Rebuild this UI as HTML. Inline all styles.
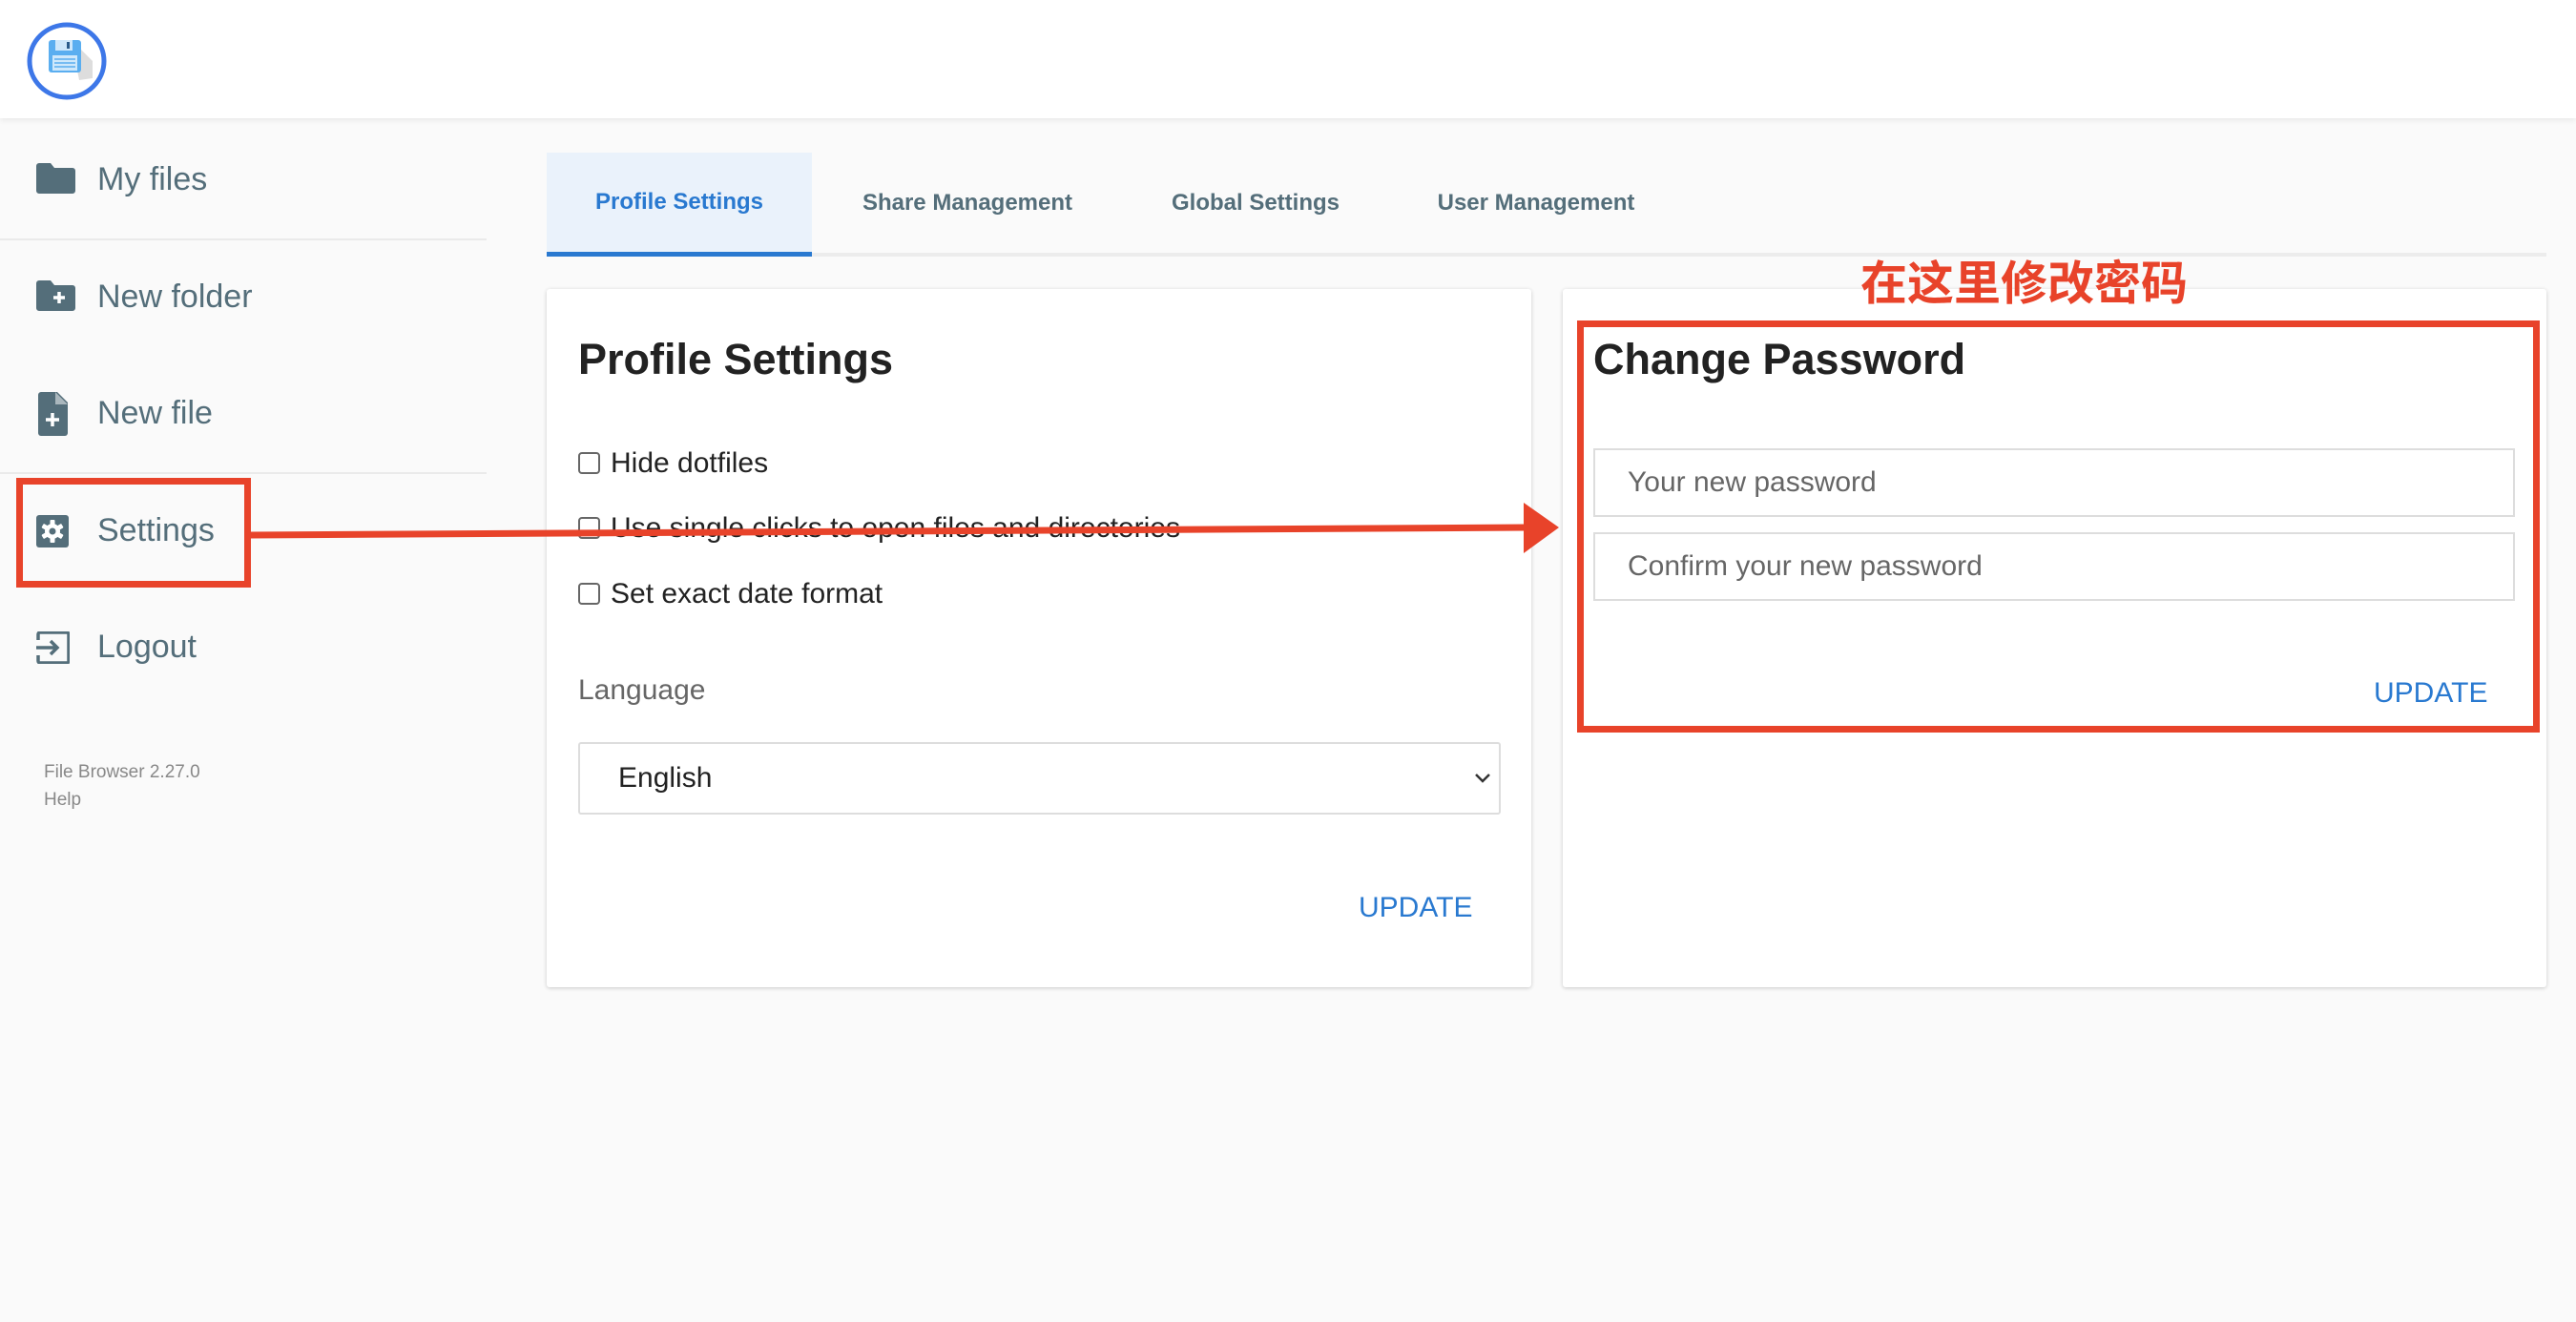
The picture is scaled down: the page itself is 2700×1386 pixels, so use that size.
<!DOCTYPE html>
<html><head><meta charset="utf-8"><style>
*{box-sizing:border-box;margin:0;padding:0}
body{width:2700px;height:1386px;background:#fafafa;font-family:"Liberation Sans",sans-serif;position:relative;overflow:hidden;color:#333}
.hdr{position:absolute;left:0;top:0;width:2700px;height:124px;background:#fff;box-shadow:0 2px 6px rgba(0,0,0,.08)}
.abs{position:absolute}
.nav{position:absolute;left:102px;font-size:34px;color:#546e7a;line-height:40px}
.ico{position:absolute;left:38px}
.div{position:absolute;left:0;width:510px;height:2px;background:#eaeaea}
.tab{position:absolute;top:160px;height:109px;line-height:106px;font-size:24px;font-weight:bold;color:#546e7a;text-align:center}
.card{position:absolute;top:303px;height:732px;background:#fff;box-shadow:0 1px 4px rgba(0,0,0,.2);border-radius:3px}
h2{position:absolute;font-size:45px;font-weight:bold;color:#222}
.cb{position:absolute;left:33px;font-size:30px;color:#222;line-height:36px}
.cb span{display:inline-block;width:23px;height:23px;border:2px solid #666;border-radius:4px;vertical-align:-2px;margin-right:11px}
.inp{position:absolute;left:32px;width:966px;height:72px;border:2px solid #ddd;font-size:30px;color:#666;padding-left:34px;line-height:68px}
.upd{position:absolute;font-size:30px;color:#2979d0}
</style></head><body>
<div class="hdr">
<svg class="abs" style="left:27px;top:22px" width="86" height="84" viewBox="0 0 86 84">
<ellipse cx="43" cy="42" rx="39" ry="38" fill="#fff" stroke="#3d77e8" stroke-width="5"/>
<path d="M48 20 L70 42 L70 60 L56 62 Z" fill="#ddd"/>
<rect x="24" y="20" width="34" height="34" rx="3" fill="#5aaef0"/>
<rect x="31" y="20" width="18" height="11" fill="#cfe8fb"/>
<rect x="43" y="22" width="3" height="7" fill="#2b5b8a"/>
<rect x="28" y="36" width="26" height="16" fill="#cfe8fb"/>
<path d="M30 40h22M30 44h22M30 48h22" stroke="#5aaef0" stroke-width="1.5"/>
</svg>
</div>
<svg class="ico" style="top:170px" width="41" height="36" viewBox="0 0 41 36"><path d="M0 4a3 3 0 0 1 3-3h12l4 5h19a3 3 0 0 1 3 3v21a3 3 0 0 1-3 3H3a3 3 0 0 1-3-3z" fill="#546e7a"/></svg>
<div class="nav" style="top:168px">My files</div>
<div class="div" style="top:250px"></div>
<svg class="ico" style="top:293px" width="41" height="36" viewBox="0 0 41 36"><path d="M0 4a3 3 0 0 1 3-3h12l4 5h19a3 3 0 0 1 3 3v21a3 3 0 0 1-3 3H3a3 3 0 0 1-3-3z" fill="#546e7a"/><path d="M24 13v12M18 19h12" stroke="#fff" stroke-width="3.5"/></svg>
<div class="nav" style="top:291px">New folder</div>
<svg class="abs" style="left:40px;top:411px" width="31" height="46" viewBox="0 0 31 46"><path d="M3 0h17l11 11v32a3 3 0 0 1-3 3H3a3 3 0 0 1-3-3V3a3 3 0 0 1 3-3z" fill="#546e7a"/><path d="M18 0v13h13" fill="#fff" opacity=".5"/><path d="M15 22v14M8 29h14" stroke="#fff" stroke-width="3.5"/></svg>
<div class="nav" style="top:413px">New file</div>
<div class="div" style="top:495px"></div>
<svg class="abs" style="left:38px;top:540px" width="34" height="34" viewBox="0 0 34 34"><rect width="34" height="34" rx="3" fill="#546e7a"/>
<g fill="#fff"><circle cx="17" cy="17" r="8"/>
<rect x="14.5" y="5" width="5" height="24" rx="1"/>
<rect x="14.5" y="5" width="5" height="24" rx="1" transform="rotate(60 17 17)"/>
<rect x="14.5" y="5" width="5" height="24" rx="1" transform="rotate(120 17 17)"/></g>
<circle cx="17" cy="17" r="3.5" fill="#546e7a"/></svg>
<div class="nav" style="top:536px">Settings</div>
<svg class="abs" style="left:38px;top:662px" width="35" height="34" viewBox="0 0 35 34"><path d="M2 9V3a2 2 0 0 1 2-2h28a2 2 0 0 1 2 2v28a2 2 0 0 1-2 2H4a2 2 0 0 1-2-2v-6" fill="none" stroke="#546e7a" stroke-width="3.5"/><path d="M0 17h22M15 10l7 7-7 7" fill="none" stroke="#546e7a" stroke-width="3.5"/></svg>
<div class="nav" style="top:658px">Logout</div>
<div class="abs" style="left:46px;top:795px;font-size:19px;color:#888;line-height:29px">File Browser 2.27.0<br>Help</div>
<div class="abs" style="left:573px;top:265px;width:2096px;height:4px;background:#ececec"></div>
<div class="tab" style="left:573px;width:278px;background:#eaf2fb;color:#2979d0;border-bottom:5px solid #2979d0;line-height:104px">Profile Settings</div>
<div class="tab" style="left:870px;width:288px">Share Management</div>
<div class="tab" style="left:1190px;width:252px">Global Settings</div>
<div class="tab" style="left:1470px;width:280px">User Management</div>
<div class="card" style="left:573px;width:1032px">
<h2 style="left:33px;top:48px">Profile Settings</h2>
<div class="cb" style="top:165px"><span></span>Hide dotfiles</div>
<div class="cb" style="top:233px"><span></span>Use single clicks to open files and directories</div>
<div class="cb" style="top:302px"><span></span>Set exact date format</div>
<div class="abs" style="left:33px;top:404px;font-size:30px;color:#666">Language</div>
<div class="abs" style="left:33px;top:475px;width:967px;height:76px;border:2px solid #ddd;border-radius:3px;font-size:30px;color:#222;padding-left:40px;line-height:72px">English<svg class="abs" style="right:8px;top:30px" width="18" height="12" viewBox="0 0 18 12"><path d="M2 2l7 7 7-7" fill="none" stroke="#333" stroke-width="2.5"/></svg></div>
<div class="upd" style="left:851px;top:632px">UPDATE</div>
</div>
<div class="card" style="left:1638px;width:1031px">
<h2 style="left:32px;top:48px">Change Password</h2>
<div class="inp" style="top:167px">Your new password</div>
<div class="inp" style="top:255px">Confirm your new password</div>
<div class="upd" style="left:850px;top:407px">UPDATE</div>
</div>
<div class="abs" style="left:17px;top:501px;width:246px;height:115px;border:7px solid #e8432a"></div>
<div class="abs" style="left:1653px;top:336px;width:1009px;height:432px;border:7px solid #e8432a"></div>
<div class="abs" style="left:1950px;top:258px;font-size:49px;color:#e8432a;font-family:'Liberation Sans','Noto Sans CJK SC',sans-serif;font-weight:bold">在这里修改密码</div>
<svg class="abs" style="left:0;top:0" width="2700" height="1386"><path d="M263 561 L1600 553" stroke="#e8432a" stroke-width="7"/><path d="M1597 527 L1634 553 L1597 580 Z" fill="#e8432a"/></svg>
</body></html>
